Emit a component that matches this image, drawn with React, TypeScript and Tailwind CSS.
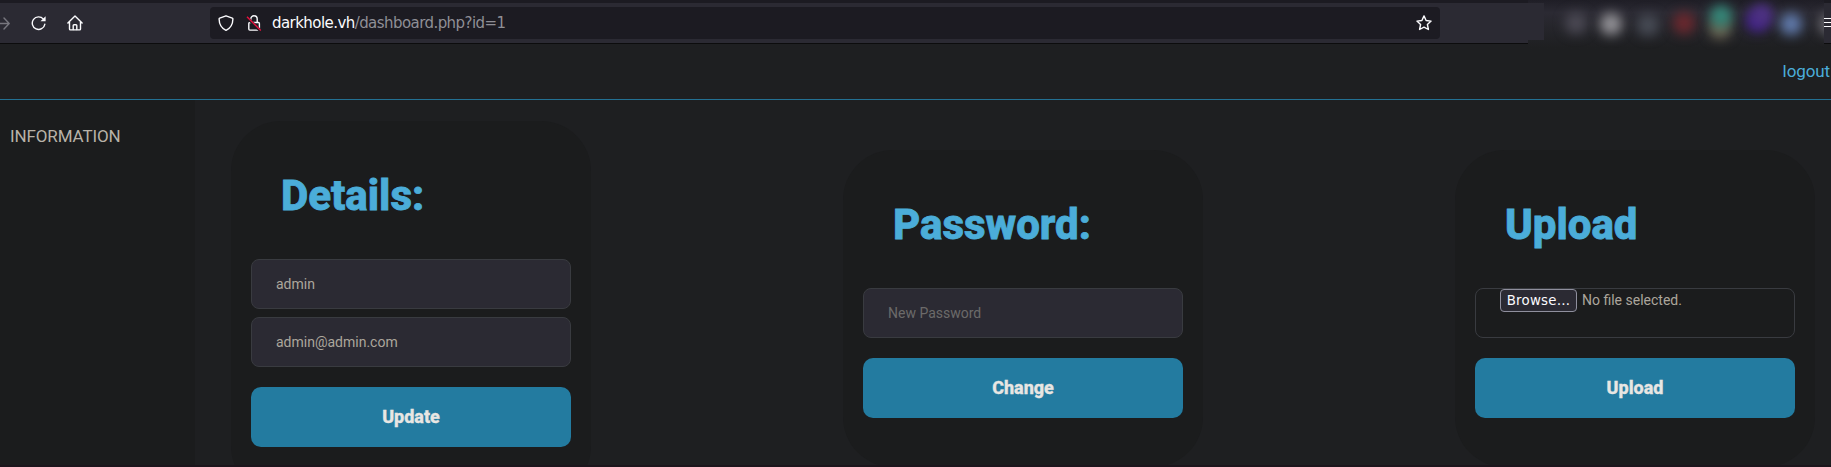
import React from 'react';

const blobs = [
  { left: 'left-[37px]', color: 'bg-[#4b4954]', top: 'top-[12px]' },
  { left: 'left-[72px]', color: 'bg-[#939297]', top: 'top-[13px]' },
  { left: 'left-[109px]', color: 'bg-[#474b55]', top: 'top-[14px]' },
  { left: 'left-[145px]', color: 'bg-[#6c282e]', top: 'top-[12px]' },
  { left: 'left-[181px]', color: 'bg-[#6b6552]', top: 'top-[17px]' },
  { left: 'left-[182px]', color: 'bg-[#34897a]', top: 'top-[5px]' },
  { left: 'left-[218px]', color: 'bg-[#41208a]', top: 'top-[10px]' },
  { left: 'left-[223px]', color: 'bg-[#4e3284]', top: 'top-[4px]' },
  { left: 'left-[252px]', color: 'bg-[#617bad]', top: 'top-[13px]' },
  { left: 'left-[291px]', color: 'bg-[#6a6970]', top: 'top-[13px]' },
];

function Toolbar() {
  return (
    <header className="relative flex h-11 shrink-0 items-center border-t-[3px] border-b border-t-[#1c1b22] border-b-[#0c0c0d] bg-[#2b2a33]">
      <svg className="h-4 w-2.5 shrink-0" viewBox="6 0 10 16" fill="none" stroke="#77767e" strokeWidth="1.4" strokeLinecap="round" strokeLinejoin="round">
        <path d="M5 8.5h10M10 3l5.2 5.5L10 14" />
      </svg>
      <svg className="ml-[21px] h-4 w-4 shrink-0" viewBox="0 0 16 16" fill="none" stroke="#fbfbfe" strokeWidth="1.4" strokeLinecap="round">
        <path d="M12.4 4.1A6.300 6.300 0 1 0 13.800 9.300" />
        <path d="M14.6 1.200v5.100H9.500z" fill="#fbfbfe" stroke="none" />
      </svg>
      <svg className="ml-5 h-4 w-4 shrink-0" viewBox="0 0 16 16" fill="none" stroke="#fbfbfe" strokeWidth="1.4" strokeLinecap="round" strokeLinejoin="round">
        <path d="M.9 8 8 1l7.1 7M2.5 7v7c0 .6.3.9.9.9h9.2c.6 0 .9-.3.9-.9V7" />
        <path d="M6.2 14.5v-4c0-.5.3-.8.8-.8h2c.5 0 .8.3.8.8v4" />
      </svg>
      <div className="ml-[127px] flex h-8 w-[1230px] items-center rounded bg-[#1c1b22]">
        <svg className="ml-2 h-4 w-4" viewBox="0 0 16 16" fill="none" stroke="#fbfbfe" strokeWidth="1.4" strokeLinejoin="round">
          <path d="M8 .8 14.300 3.200c.5.200.6.400.6.900C14.800 9.500 12.600 13.300 8 15.400 3.400 13.300 1.200 9.500 1.100 4.100c0-.5.1-.7.6-.9z" />
        </svg>
        <svg className="ml-3 h-4 w-4" viewBox="0 0 16 16" fill="none" stroke="#fbfbfe" strokeWidth="1.4">
          <rect x="2.8" y="7.500" width="10.600" height="7.600" rx="1" />
          <path d="M4.800 7V4a3.200 3.200 0 0 1 6.400 0v3.500" />
          <path d="M.8 2.200 14.600 16" stroke="#1c1b22" strokeWidth="3" />
          <path d="M1 1.700 14.800 15.500" stroke="#e8123f" strokeWidth="1.400" />
        </svg>
        <span className="ml-2.5 font-['DejaVu_Sans',sans-serif] text-[15px] tracking-[-0.56px] text-[#8f8f96]">
          <span className="text-[#fbfbfe]">darkhole.vh</span>/dashboard.php?id=1
        </span>
        <svg className="mr-2 ml-auto h-4 w-4" viewBox="0 0 16 16" fill="none" stroke="#fbfbfe" strokeWidth="1.400" strokeLinejoin="round">
          <path d="m8 .9 2.100 4.600 5 .6-3.700 3.400 1 5L8 12.100l-4.400 2.400 1-5L.9 6.100l5-.6z" />
        </svg>
      </div>
      <svg className="mb-px ml-auto h-[9px] w-[7px]" viewBox="0 0 7 9" stroke="#fbfbfe" strokeWidth="1">
        <path d="M0 .5h7M0 4.500h7M0 8.500h7" />
      </svg>
      <div className="absolute -top-[3px] left-[1528px] h-[50px] w-[296px] overflow-hidden bg-linear-to-b from-[#1f1e26] via-[#2b2a33] via-25% to-[#1e1f21] to-95%">
        <i className="absolute top-[3px] left-0 h-[37px] w-4 bg-[#2b2a33]" />
        {blobs.map((b) => (
          <i key={b.left} className={`absolute h-[22px] w-[22px] rounded-full blur-[6px] ${b.left} ${b.top} ${b.color}`} />
        ))}
      </div>
    </header>
  );
}

function Card({ title, children, button }: { title: string; children: React.ReactNode; button: string }) {
  return (
    <form className="w-[360px] shrink-0 rounded-[50px] bg-[#1b1c1d] px-5 pt-[50px] pb-[49px]">
      <h1 className="mb-[39px] ml-[30px] text-[42px] leading-[49px] font-extrabold text-[#4badd9] [-webkit-text-stroke:0.8px_#4badd9]">{title}</h1>
      <div className="flex flex-col gap-2">{children}</div>
      <button type="button" className="mt-5 block h-[60px] w-full rounded-[10px] bg-[#237ba0] text-lg font-extrabold text-[#e8e6e3] [-webkit-text-stroke:0.3px_#e8e6e3]">
        {button}
      </button>
    </form>
  );
}

const field =
  'block h-[50px] w-full rounded-lg border border-[#393b40] bg-[#2b2a33] px-6 text-sm text-[#aca69c] placeholder:text-[#6b6a6a] placeholder:opacity-100';

export default function App() {
  return (
    <div className="flex h-[467px] w-[1831px] flex-col overflow-hidden bg-[#1e1f21] font-[Roboto,sans-serif]">
      <Toolbar />
      <nav className="flex h-14 shrink-0 items-center justify-end border-b border-[#237093]">
        <a className="pr-px text-[17px] tracking-[-0.1px] text-[#4badd9]">logout</a>
      </nav>
      <div className="flex h-[365px] shrink-0 overflow-hidden">
        <aside className="w-[195px] shrink-0 bg-[#1b1c1d] pt-6 pl-[10px] text-[17px] tracking-[-0.12px] text-[#b8b2a8]">INFORMATION</aside>
        <main className="mt-[21px] ml-9 flex h-[375px] items-center gap-[252px]">
          <Card title="Details:" button="Update">
            <input className={field} defaultValue="admin" />
            <input className={field} defaultValue="admin@admin.com" />
          </Card>
          <Card title="Password:" button="Change">
            <input className={field} placeholder="New Password" />
          </Card>
          <Card title="Upload" button="Upload">
            <div className="flex h-[50px] items-start rounded-lg border border-[#393b40] pl-6 text-sm text-[#aca69c]">
              <span className="flex h-[23px] w-[77px] items-center justify-center rounded border border-[#8f8f9d] bg-[#2b2a33] font-['DejaVu_Sans',sans-serif] text-[13.33px] tracking-[0.25px] text-[#fbfbfe]">
                Browse…
              </span>
              <span className="ml-[5px] leading-[23px]">No file selected.</span>
            </div>
          </Card>
        </main>
      </div>
      <footer className="h-0.5 shrink-0 bg-[#1c151c]" />
    </div>
  );
}
